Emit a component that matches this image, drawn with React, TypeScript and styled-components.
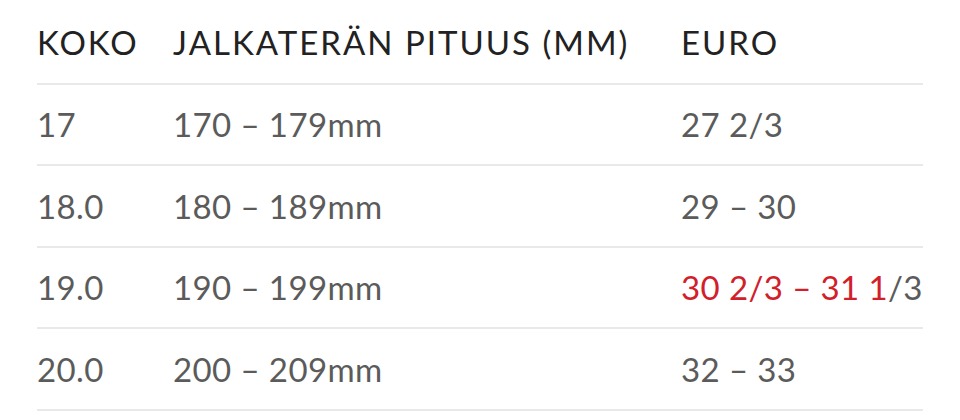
import React from "react";
import styled, { createGlobalStyle } from "styled-components";

const Global = createGlobalStyle`
  html, body { margin: 0; padding: 0; background: #ffffff; }
  body { font-family: "Lato", "Open Sans", sans-serif; }
`;

const Table = styled.div`
  margin: 3px 0 0 37px;
  width: 886px;
  display: flex;
  flex-direction: column;
`;

const Row = styled.div`
  display: grid;
  grid-template-columns: 136px 508px 1fr;
  align-items: center;
  height: 79.5px;
  border-bottom: 2px solid #e9e9e9;
`;

const HeadCell = styled.div`
  font-size: 33px;
  font-weight: 400;
  color: #222222;
  letter-spacing: 2px;
  text-transform: uppercase;
  line-height: 1;
  white-space: nowrap;
`;

const Cell = styled.div`
  font-size: 33px;
  color: #5b5b5b;
  letter-spacing: 0.4px;
  line-height: 1;
  padding-top: 1px;
  white-space: nowrap;
`;

const Hi = styled.span`
  color: #d2202b;
`;

const rows: [string, string, React.ReactNode][] = [
  ["17", "170 – 179mm", "27 2/3"],
  ["18.0", "180 – 189mm", "29 – 30"],
  [
    "19.0",
    "190 – 199mm",
    <>
      <Hi>30 2/3 – 31 1</Hi>/3
    </>,
  ],
  ["20.0", "200 – 209mm", "32 – 33"],
];

export default function App() {
  return (
    <>
      <Global />
      <Table>
        <Row>
          <HeadCell>Koko</HeadCell>
          <HeadCell>Jalkaterän pituus (mm)</HeadCell>
          <HeadCell>Euro</HeadCell>
        </Row>
        {rows.map(([a, b, c], i) => (
          <Row key={i}>
            <Cell>{a}</Cell>
            <Cell>{b}</Cell>
            <Cell>{c}</Cell>
          </Row>
        ))}
      </Table>
    </>
  );
}
